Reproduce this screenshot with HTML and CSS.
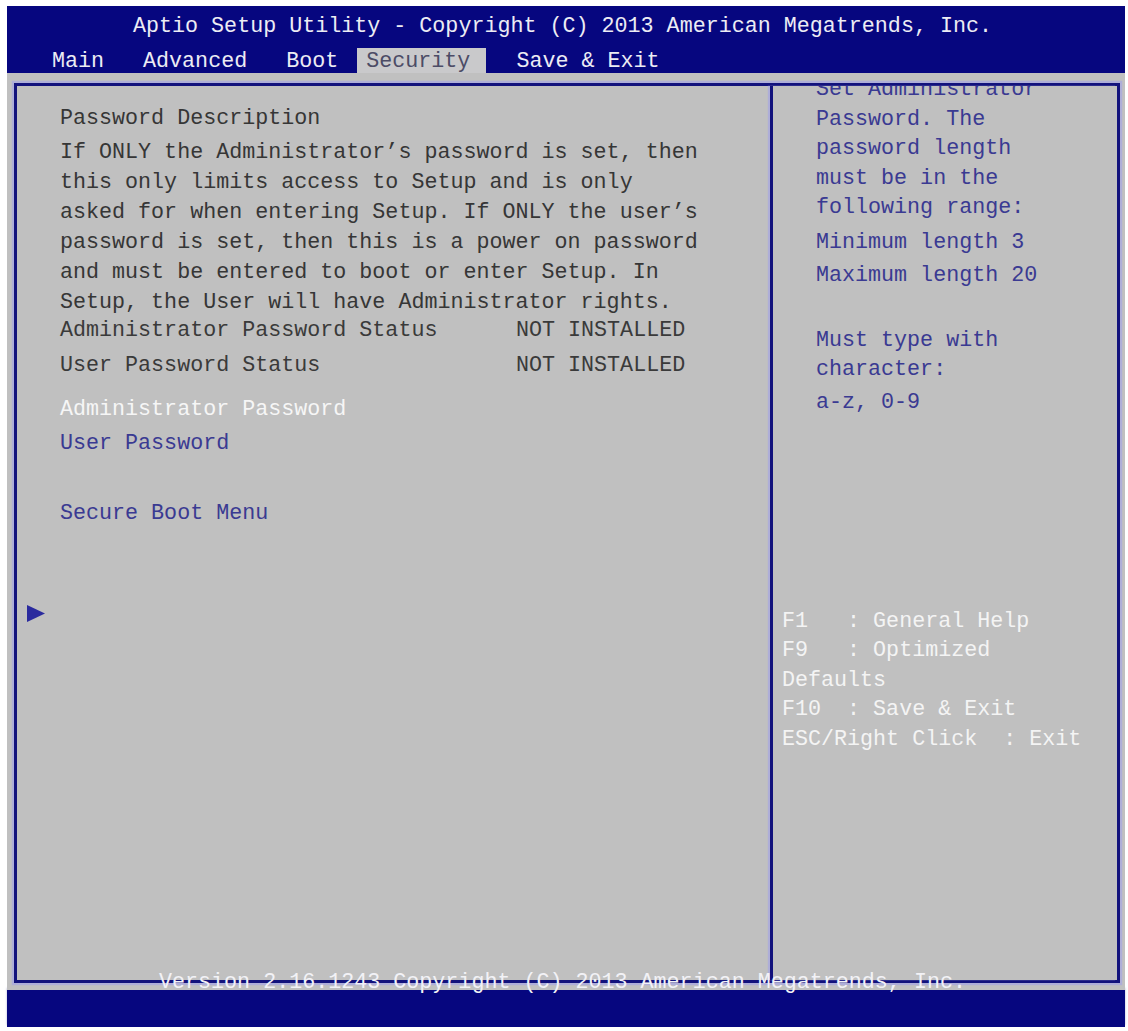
FILE: index.html
```html
<!DOCTYPE html>
<html lang="en">
<head>
    <meta charset="UTF-8">
    <title>Aptio Setup Utility</title>
    <link rel="stylesheet" href="styles.css">
</head>
<body>
    <div class="screen">
        <div class="topbar">
            <div class="title">Aptio Setup Utility - Copyright (C) 2013 American Megatrends, Inc.</div>
            <div class="tabs">
                <span class="tab">Main</span>
                <span class="tab">Advanced</span>
                <span class="tab">Boot</span>
                <span class="tab active">Security</span>
                <span class="tab">Save &amp; Exit</span>
            </div>
        </div>

        <div class="main">
            <div class="frame">
                <!-- left: settings -->
                <div class="left">
                    <div class="line head">Password Description</div>
                    <div class="desc">
                        <div class="line">If ONLY the Administrator’s password is set, then</div>
                        <div class="line">this only limits access to Setup and is only</div>
                        <div class="line">asked for when entering Setup. If ONLY the user’s</div>
                        <div class="line">password is set, then this is a power on password</div>
                        <div class="line">and must be entered to boot or enter Setup. In</div>
                        <div class="line">Setup, the User will have Administrator rights.</div>
                    </div>
                    <div class="status first">
                        <span class="label">Administrator Password Status</span>
                        <span class="value">NOT INSTALLED</span>
                    </div>
                    <div class="status second">
                        <span class="label">User Password Status</span>
                        <span class="value">NOT INSTALLED</span>
                    </div>
                    <div class="item selected">Administrator Password</div>
                    <div class="item user">User Password</div>
                    <div class="item secure">Secure Boot Menu</div>
                    <div class="pointer">
                        <svg width="18" height="17" viewBox="0 0 18 17"><polygon points="0,0 18,8.5 0,17" fill="#2a2a9e"/></svg>
                    </div>
                </div>

                <!-- right: help -->
                <div class="right">
                    <div class="help">
                        <div class="para">
                            <div>Set Administrator</div>
                            <div>Password. The</div>
                            <div>password length</div>
                            <div>must be in the</div>
                            <div>following range:</div>
                        </div>
                        <div class="hline min">Minimum length 3</div>
                        <div class="hline max">Maximum length 20</div>
                        <div class="para must">
                            <div>Must type with</div>
                            <div>character:</div>
                        </div>
                        <div class="hline chars">a-z, 0-9</div>
                    </div>
                    <div class="keys">
                        <div>F1&nbsp;&nbsp;&nbsp;: General Help</div>
                        <div>F9&nbsp;&nbsp;&nbsp;: Optimized</div>
                        <div>Defaults</div>
                        <div>F10&nbsp;&nbsp;: Save &amp; Exit</div>
                        <div>ESC/Right Click&nbsp;&nbsp;: Exit</div>
                    </div>
                </div>
            </div>
            <div class="version">Version 2.16.1243 Copyright (C) 2013 American Megatrends, Inc.</div>
        </div>

        <div class="bottombar"></div>
    </div>
</body>
</html>
```

FILE: styles.css
```css
*{
    margin:0;
    padding:0;
    box-sizing:border-box;
}
body{
    background:#fff;
    font-family:"Liberation Mono", "DejaVu Sans Mono", monospace;
    font-size:21.7px;
}
.screen{
    width:1118px;
    height:1021px;
    margin:6px 0 0 7px;
    display:flex;
    flex-direction:column;
    position:relative;
}
.topbar{
    background:#06067f;
    color:#ececf4;
    height:67px;
}
.title{
    height:42px;
    line-height:42px;
    text-align:center;
    padding-right:7px;
}
.tabs{
    display:flex;
    gap:21px;
    padding-left:36px;
    height:25px;
    line-height:27px;
}
.tab{
    padding:0 9px;
    white-space:pre;
}
.tab.active{
    background:#c9c9cb;
    color:#4c4c66;
    padding:0 16px 0 9px;
    margin-left:-11px;
}
.main{
    background:#c0c0c0;
    height:917px;
    padding:10px 5px 7px 7px;
    position:relative;
}
.frame{
    height:900px;
    border:3px solid #12127c;
    box-shadow:0 0 1px 2px #aeaed8;
    display:flex;
}
.left{
    width:753px;
    padding:18px 0 0 43px;
    color:#363636;
    line-height:30px;
}
.line{
    white-space:pre;
}
.head{
    margin-bottom:4px;
}
.status{
    display:flex;
    color:#3a3a3a;
}
.status.first{
    margin-top:-2px;
}
.status.second{
    margin-top:5px;
}
.status .label{
    width:456px;
}
.item{
    color:#3a3a92;
}
.item.selected{
    color:#f6f6f6;
    margin-top:14px;
}
.item.user{
    margin-top:4px;
}
.item.secure{
    margin-top:40px;
}
.pointer{
    margin:76px 0 0 -33px;
    height:17px;
    line-height:0;
}
.right{
    flex:1;
    border-left:3px solid #12127c;
    box-shadow:-2px 0 1px #aeaed8;
    overflow:hidden;
    display:flex;
    flex-direction:column;
}
.help{
    color:#3a3a92;
    padding-left:43px;
    margin-top:-11px;
    line-height:29.5px;
}
.hline{
    line-height:30px;
}
.min{
    margin-top:5px;
}
.max{
    margin-top:3px;
}
.must{
    margin-top:35px;
}
.chars{
    margin-top:3px;
}
.keys{
    margin-top:189px;
    padding-left:9px;
    color:#f4f4f4;
    line-height:29.5px;
}
.version{
    position:absolute;
    left:0;
    right:0;
    top:899px;
    text-align:center;
    padding-right:7px;
    color:#f2f2f6;
    line-height:22px;
}
.bottombar{
    background:#06067f;
    height:37px;
    box-shadow:0 -2px 2px #aeaed8;
}
```
